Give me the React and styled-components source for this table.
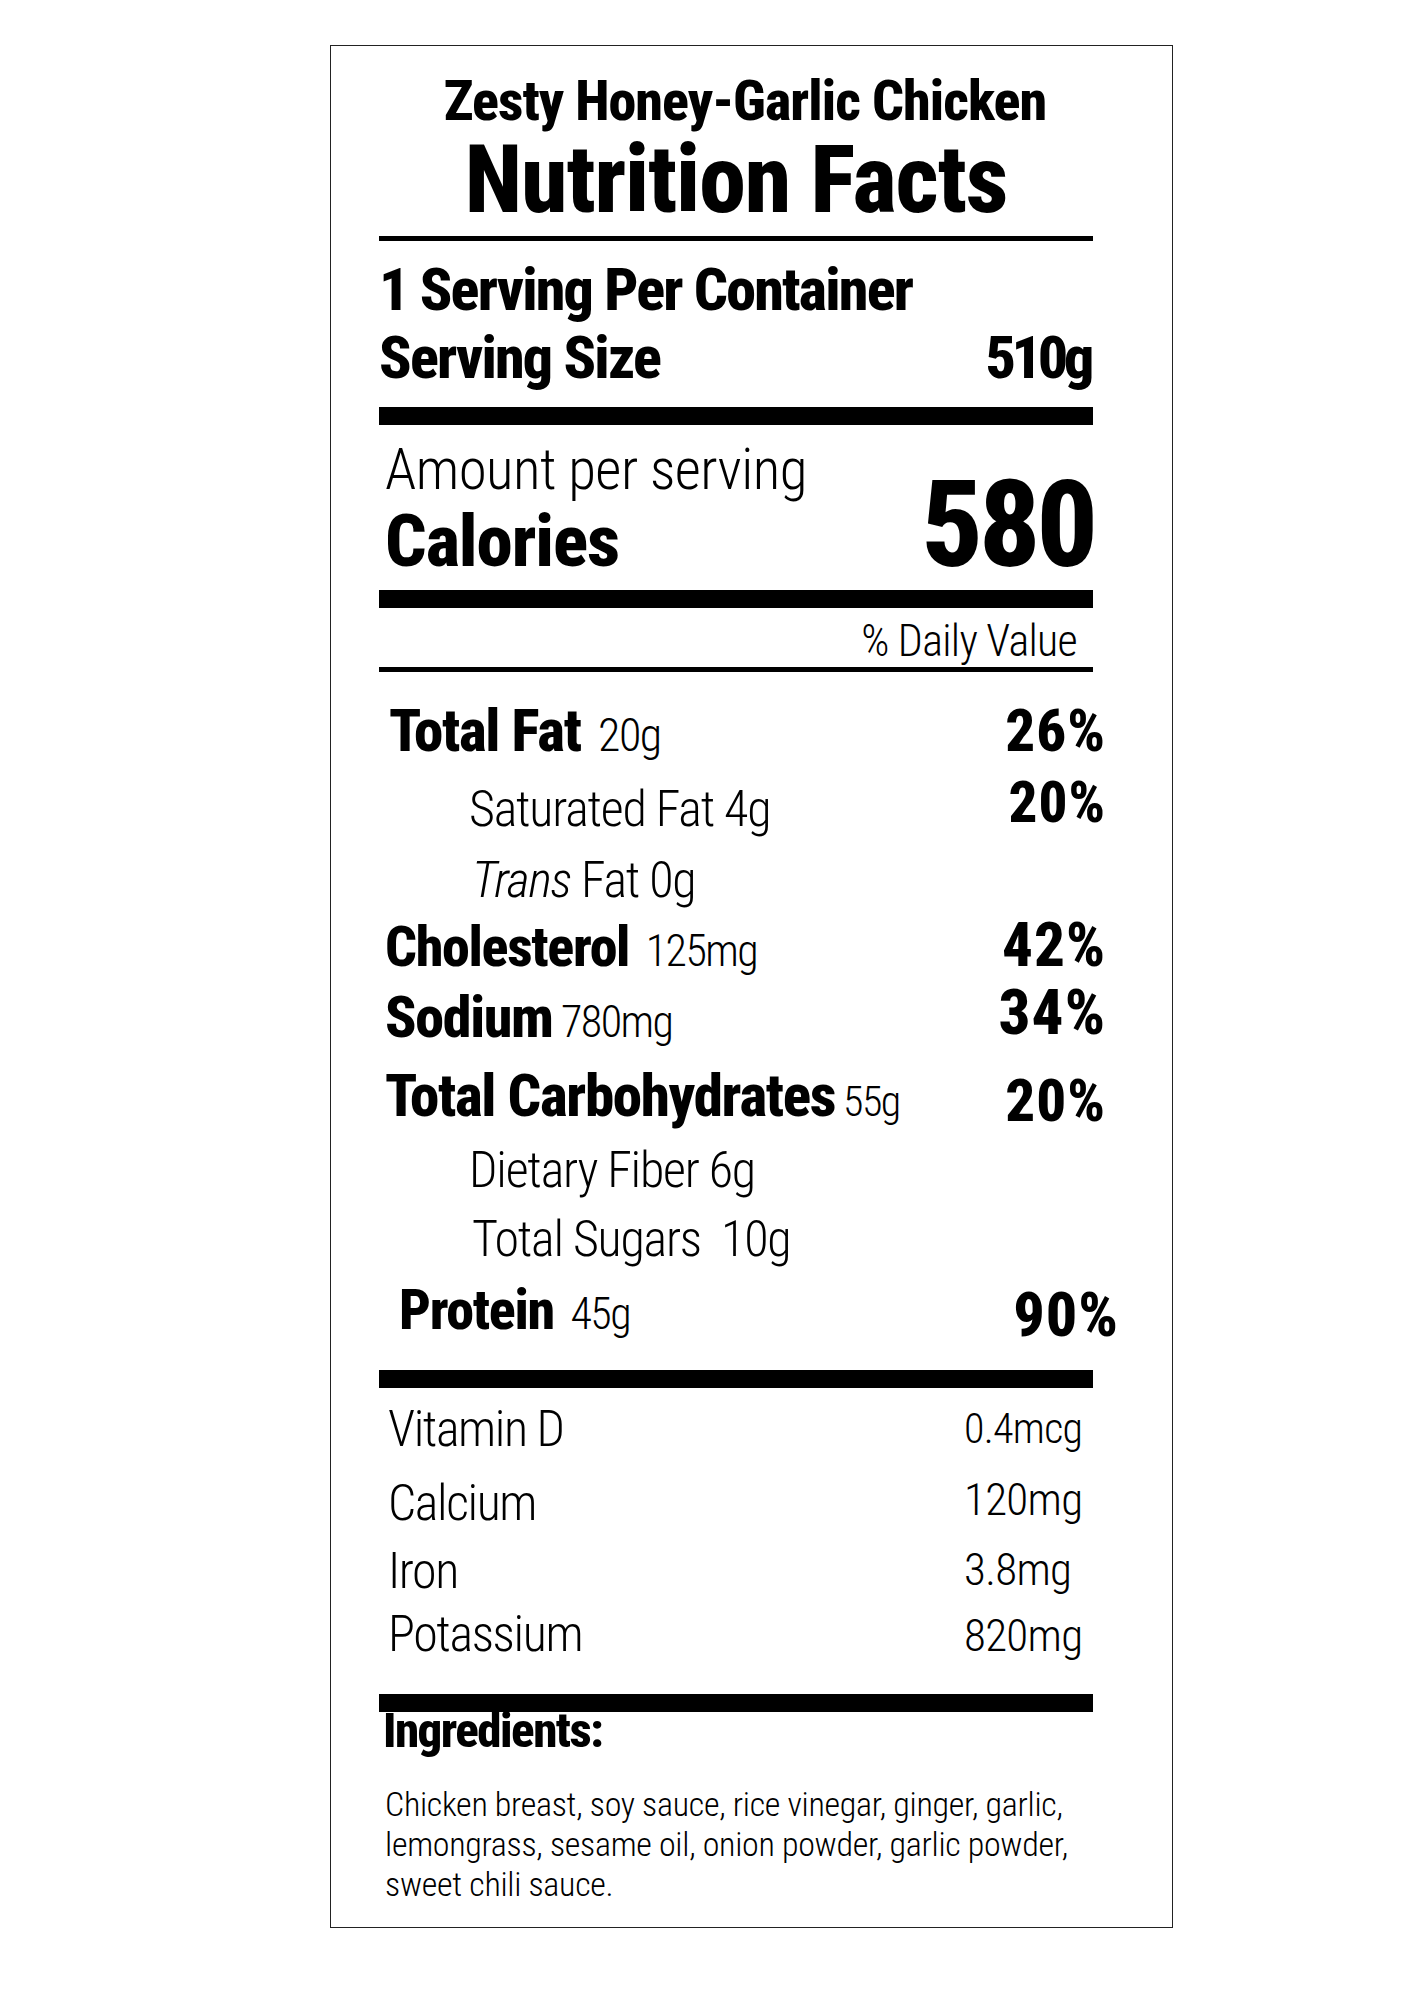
import React from 'react';
import styled, { createGlobalStyle } from 'styled-components';

const HEAVY = 850;
const LIGHT = 350;

const GlobalStyle = createGlobalStyle`
  body {
    margin: 0;
    background: #fff;
    color: #000;
    font-family: Roboto, "Liberation Sans", sans-serif;
    font-stretch: 75%;
  }
`;

const Page = styled.div`
  padding: 45px 0 0 330px;
`;

const Label = styled.div`
  box-sizing: border-box;
  width: 843px;
  height: 1883px;
  border: 1.5px solid #222;
  padding: 27px 79px 0 48px;
  display: flex;
  flex-direction: column;
  line-height: 1;

  & > * {
    flex-shrink: 0;
  }
`;

const Header = styled.div`
  display: flex;
  flex-direction: column;
  align-items: center;
`;

const DishName = styled.div`
  font-size: 56px;
  font-weight: ${HEAVY};
  letter-spacing: -0.95px;
  padding-left: 18px;
`;

const Heading = styled.div`
  font-size: 94px;
  font-weight: ${HEAVY};
  letter-spacing: -1.1px;
  margin-top: 4px;
`;

const Rule = styled.div`
  height: ${(p) => (p.$thick ? 18 : 5)}px;
  background: #000;
  margin-top: ${(p) => p.$top}px;
`;

const ServingLine = styled.div`
  display: flex;
  justify-content: space-between;
  align-items: baseline;
  font-size: 60px;
  font-weight: ${HEAVY};
  letter-spacing: -1.8px;
  padding-right: 3px;
  margin-top: ${(p) => p.$top}px;
`;

const ServingValue = styled.span`
  letter-spacing: -4.3px;
`;

const CaloriesRow = styled.div`
  display: flex;
  justify-content: space-between;
  align-items: last baseline;
  padding-left: 6px;
  margin-top: 16px;
`;

const AmountCol = styled.div`
  display: flex;
  flex-direction: column;
  gap: 7px;
`;

const AmountText = styled.div`
  font-size: 57px;
  font-weight: ${LIGHT};
  letter-spacing: -0.55px;
`;

const CaloriesText = styled.div`
  font-size: 73px;
  font-weight: ${HEAVY};
  letter-spacing: -1.05px;
`;

const CaloriesValue = styled.div`
  font-size: 121px;
  font-weight: ${HEAVY};
  letter-spacing: -4px;
  margin-right: -1px;
`;

const DailyValue = styled.div`
  align-self: flex-end;
  font-size: 44px;
  font-weight: ${LIGHT};
  letter-spacing: -0.7px;
  padding-right: 16px;
  margin-top: 11px;
`;

const NutrientRow = styled.div`
  display: flex;
  justify-content: space-between;
  align-items: baseline;
  padding-left: ${(p) => p.$indent}px;
  margin-top: ${(p) => p.$top}px;
  margin-right: ${(p) => -p.$overhang}px;
  white-space: pre;
`;

const NutrientName = styled.span`
  font-size: ${(p) => p.$size}px;
  font-weight: ${(p) => (p.$bold ? HEAVY : LIGHT)};
  letter-spacing: ${(p) => (p.$bold ? -1.3 : -1.2)}px;
`;

const NutrientAmount = styled.span`
  font-size: ${(p) => p.$size}px;
  font-weight: ${LIGHT};
  letter-spacing: -1.6px;
`;

const Percent = styled.span`
  display: inline-block;
  font-size: ${(p) => p.$size}px;
  font-weight: ${HEAVY};
  letter-spacing: 1px;
  transform: translateY(${(p) => p.$shift || 0}px);
`;

const MineralRow = styled.div`
  display: grid;
  grid-template-columns: 576px auto;
  align-items: baseline;
  padding-left: 9px;
  margin-top: ${(p) => p.$top}px;
`;

const MineralName = styled.span`
  font-size: 50px;
  font-weight: ${LIGHT};
  letter-spacing: -1.4px;
`;

const MineralValue = styled.span`
  display: inline-block;
  font-size: ${(p) => p.$size}px;
  font-weight: ${LIGHT};
  letter-spacing: -0.7px;
  transform: translateY(${(p) => p.$shift}px);
`;

const IngredientsTitle = styled.div`
  font-size: 49px;
  font-weight: ${HEAVY};
  letter-spacing: -1.55px;
  padding-left: 4px;
  margin-top: -6px;
`;

const IngredientsText = styled.p`
  margin: 29px 0 0;
  padding-left: 6px;
  font-size: 34px;
  font-weight: ${LIGHT};
  letter-spacing: -0.3px;
  line-height: 40px;
  white-space: nowrap;
`;

const nutrients = [
  { name: 'Total Fat', amount: '  20g', pct: '26%', bold: true, size: 59, amountSize: 46, pctSize: 59, indent: 10, top: 29 },
  { name: 'Saturated Fat 4g', pct: '20%', size: 50, pctSize: 57, shift: -4, indent: 90, top: 18 },
  { name: 'Fat 0g', italic: 'Trans ', size: 50, indent: 93, top: 20 },
  { name: 'Cholesterol', amount: '  125mg', pct: '42%', bold: true, size: 56, amountSize: 44, pctSize: 61, indent: 6, top: 10 },
  { name: 'Sodium', amount: ' 780mg', pct: '34%', bold: true, size: 58, amountSize: 44, pctSize: 63, shift: -3, indent: 6, top: 8 },
  { name: 'Total Carbohydrates', amount: ' 55g', pct: '20%', bold: true, size: 59, amountSize: 42, pctSize: 59, shift: 5, indent: 6, top: 19 },
  { name: 'Dietary Fiber 6g', size: 50, indent: 90, top: 20 },
  { name: 'Total Sugars  10g', size: 50, indent: 93, top: 19 },
  { name: 'Protein', amount: '  45g', pct: '90%', bold: true, size: 56, amountSize: 44, pctSize: 62, shift: 7, indent: 20, top: 13, overhang: 26 },
];

const minerals = [
  { name: 'Vitamin D', value: '0.4mcg', size: 42, shift: -3, top: 16 },
  { name: 'Calcium', value: '120mg', size: 45, shift: -5, top: 24 },
  { name: 'Iron', value: '3.8mg', size: 45, shift: -3, top: 18 },
  { name: 'Potassium', value: '820mg', size: 45, shift: 0, top: 13 },
];

export default function App() {
  return (
    <>
      <GlobalStyle />
      <Page>
        <Label>
          <Header>
            <DishName>Zesty Honey-Garlic Chicken</DishName>
            <Heading>Nutrition Facts</Heading>
          </Header>
          <Rule $top={9} />

          <ServingLine $top={19}>1 Serving Per Container</ServingLine>
          <ServingLine $top={8}>
            <span>Serving Size</span>
            <ServingValue>510g</ServingValue>
          </ServingLine>
          <Rule $thick $top={19} />

          <CaloriesRow>
            <AmountCol>
              <AmountText>Amount per serving</AmountText>
              <CaloriesText>Calories</CaloriesText>
            </AmountCol>
            <CaloriesValue>580</CaloriesValue>
          </CaloriesRow>
          <Rule $thick $top={4} />

          <DailyValue>% Daily Value</DailyValue>
          <Rule $top={4} />

          {nutrients.map((n) => (
            <NutrientRow key={n.name} $indent={n.indent} $top={n.top} $overhang={n.overhang ?? 13}>
              <span>
                <NutrientName $size={n.size} $bold={n.bold}>
                  {n.italic && <i>{n.italic}</i>}
                  {n.name}
                </NutrientName>
                {n.amount && <NutrientAmount $size={n.amountSize}>{n.amount}</NutrientAmount>}
              </span>
              {n.pct && <Percent $size={n.pctSize} $shift={n.shift}>{n.pct}</Percent>}
            </NutrientRow>
          ))}
          <Rule $thick $top={31} />

          {minerals.map((m) => (
            <MineralRow key={m.name} $top={m.top}>
              <MineralName>{m.name}</MineralName>
              <MineralValue $size={m.size} $shift={m.shift}>{m.value}</MineralValue>
            </MineralRow>
          ))}
          <Rule $thick $top={35} />

          <IngredientsTitle>Ingredients:</IngredientsTitle>
          <IngredientsText>
            Chicken breast, soy sauce, rice vinegar, ginger, garlic,
            <br />
            lemongrass, sesame oil, onion powder, garlic powder,
            <br />
            sweet chili sauce.
          </IngredientsText>
        </Label>
      </Page>
    </>
  );
}
